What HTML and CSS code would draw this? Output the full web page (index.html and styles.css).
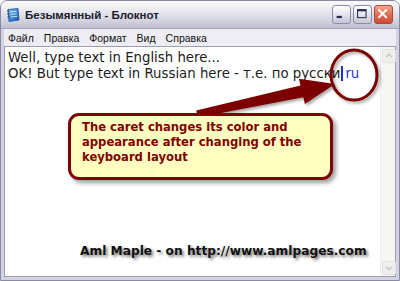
FILE: index.html
```html
<!DOCTYPE html>
<html lang="ru">
<head>
<meta charset="utf-8">
<title>Безымянный - Блокнот</title>
<link rel="stylesheet" href="styles.css">
</head>
<body>
<div class="window">
  <div class="titlebar">
    <svg class="app-icon" viewBox="0 0 14 14" width="14" height="14">
      <defs>
        <linearGradient id="ig" x1="0" y1="0" x2="1" y2="1">
          <stop offset="0" stop-color="#8cc4f4"/>
          <stop offset="0.5" stop-color="#3c86d8"/>
          <stop offset="1" stop-color="#1c56a8"/>
        </linearGradient>
      </defs>
      <path d="M2 1.5 L12 0.5 L13 12 L3 13.5 Z" fill="url(#ig)" stroke="#1d4f96" stroke-width="0.8"/>
      <path d="M4.5 4 L10.5 3.4 M4.7 6.5 L10.8 5.9 M4.9 9 L11 8.4" stroke="#d6ecff" stroke-width="0.9"/>
      <path d="M1 3 L3 2.8 M1.2 6 L3.2 5.8 M1.4 9 L3.4 8.8" stroke="#12386e" stroke-width="1"/>
    </svg>
    <span class="title">Безымянный - Блокнот</span>
    <div class="controls">
      <span class="btn">
        <svg viewBox="0 0 19 19" width="17" height="17"><rect x="4" y="11" width="6" height="2.5" fill="#2c3150"/></svg>
      </span>
      <span class="btn">
        <svg viewBox="0 0 19 19" width="17" height="17"><rect x="4" y="4" width="9.5" height="9" fill="none" stroke="#2c3150" stroke-width="1.2"/><rect x="4" y="4" width="9.5" height="2" fill="#2c3150"/></svg>
      </span>
      <span class="btn close">
        <svg viewBox="0 0 19 19" width="17" height="17"><path d="M4.5 4.5 L12.5 12.5 M12.5 4.5 L4.5 12.5" stroke="#fff" stroke-width="2.2" stroke-linecap="round"/></svg>
      </span>
    </div>
  </div>
  <div class="menubar">
    <span>Файл</span>
    <span>Правка</span>
    <span>Формат</span>
    <span>Вид</span>
    <span>Справка</span>
  </div>
  <div class="editor">
    <div class="text">
      <div class="line">Well, type text in English here...</div>
      <div class="line">OK! But type text in Russian here - т.е. по русски<span class="caret"></span><span class="layout">ru</span></div>
    </div>
    <div class="scrollbar">
      <span class="sb-btn">
        <svg viewBox="0 0 14 14" width="12" height="12"><path d="M3.5 8.5 L7 5 L10.5 8.5" fill="none" stroke="#c4c4cc" stroke-width="1.6"/></svg>
      </span>
      <span class="sb-btn">
        <svg viewBox="0 0 14 14" width="12" height="12"><path d="M3.5 5.5 L7 9 L10.5 5.5" fill="none" stroke="#c4c4cc" stroke-width="1.6"/></svg>
      </span>
    </div>
  </div>

  <svg class="overlay" viewBox="0 0 400 281" width="400" height="281">
    <defs>
      <filter id="sh" x="-20%" y="-20%" width="140%" height="140%">
        <feDropShadow dx="2" dy="2" stdDeviation="1.4" flood-color="#000" flood-opacity="0.35"/>
      </filter>
    </defs>
    <ellipse cx="354" cy="75" rx="23" ry="25" fill="none" stroke="#7c0606" stroke-width="3" filter="url(#sh)"/>
    <polygon points="196.2,110.6 300.5,85.6 298.9,78.8 335,84 304.9,104.1 303.3,97.2 197.8,117.4" fill="#7c0606" filter="url(#sh)"/>
  </svg>

  <div class="callout">The caret changes its color and<br>appearance after changing of the<br>keyboard layout</div>

  <div class="credit">Aml Maple - on http://www.amlpages.com</div>
</div>
</body>
</html>
```

FILE: styles.css
```css
html, body {
  margin: 0;
  padding: 0;
  background: #ffffff;
}

body {
  width: 400px;
  height: 281px;
  overflow: hidden;
}

.window {
  position: relative;
  box-sizing: border-box;
  width: 400px;
  height: 281px;
  border: 1px solid #8a8aa2;
  border-radius: 7px 7px 0 0;
  background: #d2d2e0;
  padding: 0 3px 3px 3px;
  display: flex;
  flex-direction: column;
  font-family: "Liberation Sans", Arial, sans-serif;
}

.titlebar {
  margin: 0 -3px;
  height: 27px;
  flex: none;
  display: flex;
  align-items: center;
  padding: 0 6px 0 5px;
  border-radius: 6px 6px 0 0;
  background: linear-gradient(#fbfbfd 0%, #ececf2 30%, #d8d8e4 65%, #bfbfd0 100%);
  border-bottom: 1px solid #a6a6bc;
}

.app-icon {
  flex: none;
  margin-right: 5px;
}

.title {
  flex: 1;
  font-weight: bold;
  font-size: 11.5px;
  color: #1c1c2c;
}

.controls {
  display: flex;
  gap: 2px;
}

.btn {
  box-sizing: border-box;
  width: 19px;
  height: 19px;
  border: 1px solid #8c8ca8;
  border-radius: 3px;
  background: linear-gradient(#ffffff 0%, #e4e4ee 50%, #c6c6d6 100%);
  display: flex;
  align-items: center;
  justify-content: center;
}

.btn.close {
  border-color: #a84a3c;
  background: linear-gradient(#f3aa92 0%, #e27356 45%, #cc4a34 100%);
}

.menubar {
  flex: none;
  height: 17px;
  display: flex;
  align-items: center;
  gap: 10px;
  padding-left: 4px;
  background: #ededf3;
  font-size: 10.5px;
  color: #111;
}

.editor {
  flex: 1;
  min-height: 0;
  display: flex;
  border: 1px solid #9c9cb4;
  background: #ffffff;
}

.text {
  flex: 1;
  padding: 3px 3px;
  font-family: "DejaVu Sans", Verdana, sans-serif;
  font-size: 13.3px;
  line-height: 16px;
  color: #1c1c1c;
  white-space: nowrap;
}

.caret {
  display: inline-block;
  width: 2px;
  height: 15px;
  margin-left: 1px;
  vertical-align: -3px;
  background: #1c2cff;
}

.layout {
  margin-left: 2px;
  color: #2233dd;
}

.scrollbar {
  flex: none;
  width: 15px;
  box-sizing: border-box;
  display: flex;
  flex-direction: column;
  justify-content: space-between;
  padding: 2px 0 1px 1px;
  background: #f6f6f4;
  border-left: 1px solid #ececea;
}

.sb-btn {
  box-sizing: border-box;
  width: 14px;
  height: 14px;
  border: 1px solid #e2e2de;
  border-radius: 2px;
  background: #efefec;
  display: flex;
  align-items: center;
  justify-content: center;
}

.overlay {
  position: absolute;
  left: -1px;
  top: -1px;
  pointer-events: none;
}

.callout {
  position: absolute;
  left: 67px;
  top: 112px;
  box-sizing: border-box;
  width: 265px;
  height: 67px;
  border: 3px solid #7c0606;
  border-radius: 11px;
  background: #ffffc2;
  box-shadow: 3px 3px 4px rgba(40, 40, 40, 0.45);
  padding: 4px 0 0 11px;
  font-family: "DejaVu Sans", Verdana, sans-serif;
  font-weight: bold;
  font-size: 11.6px;
  line-height: 15px;
  color: #800000;
  white-space: nowrap;
}

.credit {
  position: absolute;
  left: 79px;
  top: 243px;
  font-family: "DejaVu Sans", Verdana, sans-serif;
  font-weight: bold;
  font-size: 12.2px;
  line-height: 14px;
  color: #111;
  white-space: nowrap;
  text-shadow: 2px 2px 3px rgba(0, 0, 0, 0.55);
}
```
